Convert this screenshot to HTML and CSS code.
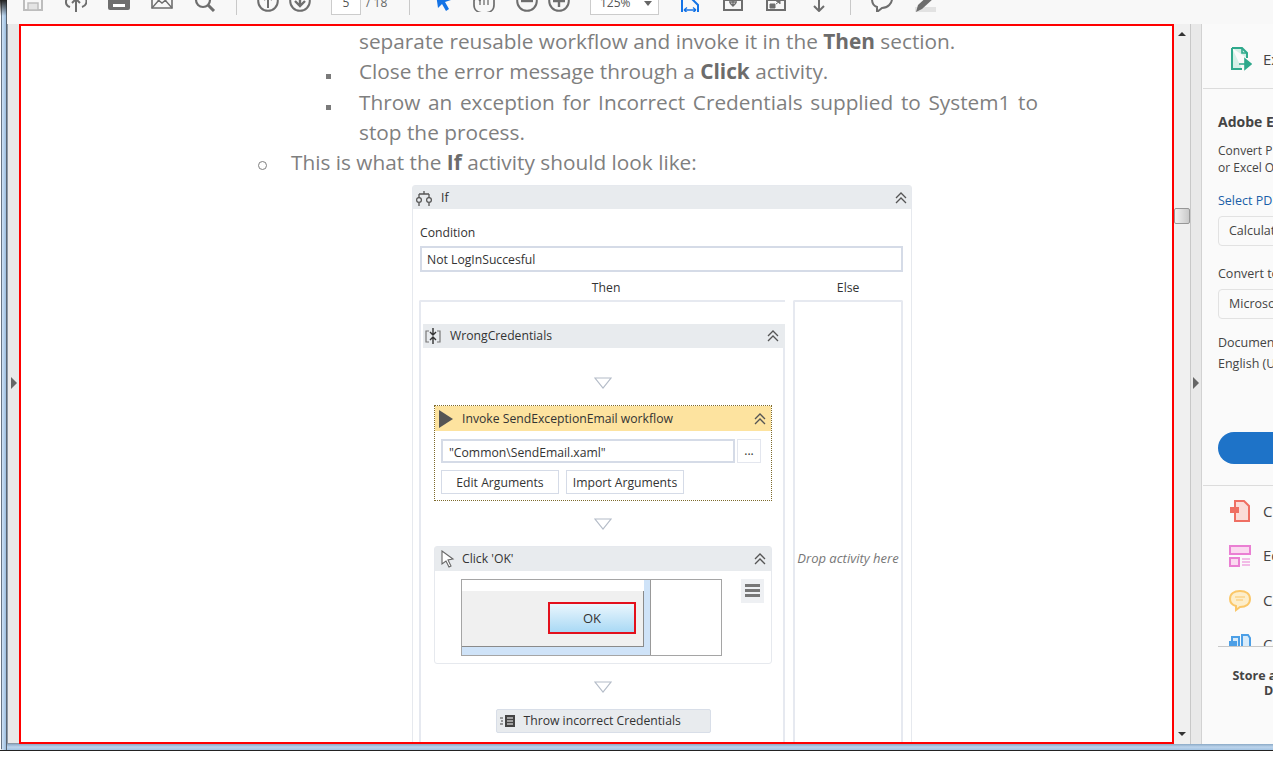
FILE: index.html
```html
<!DOCTYPE html>
<html>
<head>
  <title>Reader</title>
  <link rel="stylesheet" href="styles.css">
</head>
<body>
  <div class="window">
    <div class="edge-left"></div>
    <div class="shell">

      <div class="toolbar">
        <div class="tb-group">
          <svg class="ico" viewBox="0 0 22 22"><path d="M2 1h18v19H2z" fill="none" stroke="#bdbdbd" stroke-width="2"/><path d="M6 13h10v7H6z" fill="#e4e4e4" stroke="#bdbdbd" stroke-width="1.5"/></svg>
          <svg class="ico" viewBox="0 0 22 22"><path d="M5 17C-1 15 0 7 6 7 7 1 16 1 17 7c6 0 6 8 0 10" fill="none" stroke="#6e6e6e" stroke-width="2"/><path d="M11 22V9M7 13l4-4 4 4" fill="none" stroke="#6e6e6e" stroke-width="2"/></svg>
          <svg class="ico" viewBox="0 0 22 22"><path d="M0 3h22v15a2 2 0 0 1-2 2H2a2 2 0 0 1-2-2z" fill="#6e6e6e"/><path d="M5 14h12v3H5z" fill="#fff"/></svg>
          <svg class="ico" viewBox="0 0 22 22"><path d="M1 1h20v17H1z" fill="none" stroke="#6e6e6e" stroke-width="1.6"/><path d="M1 18l7-8 3-3 3 3 7 8M1 5l10 8 10-8" fill="none" stroke="#6e6e6e" stroke-width="1.4"/></svg>
          <svg class="ico" viewBox="0 0 22 22"><circle cx="9" cy="10" r="7" fill="none" stroke="#6e6e6e" stroke-width="2.2"/><path d="M14 15l6 6" stroke="#6e6e6e" stroke-width="3"/></svg>
        </div>
        <div class="tb-sep"></div>
        <div class="tb-group tight">
          <svg class="ico" viewBox="0 0 22 22"><circle cx="11" cy="11" r="9.8" fill="none" stroke="#6e6e6e" stroke-width="2"/><path d="M11 18V6M7 10l4-4 4 4" fill="none" stroke="#6e6e6e" stroke-width="2"/></svg>
          <svg class="ico" viewBox="0 0 22 22"><circle cx="11" cy="11" r="9.8" fill="none" stroke="#6e6e6e" stroke-width="2"/><path d="M11 4v12M6 11l5 5 5-5" fill="none" stroke="#6e6e6e" stroke-width="2.4"/></svg>
        </div>
        <div class="page-box">5</div>
        <div class="page-total">/ 18</div>
        <div class="tb-sep"></div>
        <div class="tb-group">
          <svg class="ico" viewBox="0 0 22 22"><path d="M6 4l15 6-6 2 4 7-3 2-4-7-4 4z" fill="#1473e6"/></svg>
          <svg class="ico" viewBox="0 0 22 22"><path d="M1 11v4c0 5 4 8 10 8s10-3 10-8V8c0-3-3-3-3 0V5c0-3-3-3-3 0V3c0-3-4-3-4 0v1C11 1 7 1 7 4v7C6 8 1 8 1 11z" fill="none" stroke="#6e6e6e" stroke-width="1.7"/><path d="M11 8v7M15 8v7M7 10v5" stroke="#6e6e6e" stroke-width="1.3"/></svg>
          <div class="tb-group tight">
            <svg class="ico" viewBox="0 0 22 22"><circle cx="11" cy="11" r="9.8" fill="none" stroke="#6e6e6e" stroke-width="2"/><path d="M5 11h12" stroke="#6e6e6e" stroke-width="2.4"/></svg>
            <svg class="ico" viewBox="0 0 22 22"><circle cx="11" cy="11" r="9.8" fill="none" stroke="#6e6e6e" stroke-width="2"/><path d="M5 11h12M11 5v12" stroke="#6e6e6e" stroke-width="2.4"/></svg>
          </div>
        </div>
        <div class="zoom-box"><span>125%</span><i class="caret"></i></div>
        <div class="tb-group">
          <svg class="ico" viewBox="0 0 22 22"><path d="M3 22V5h9l1 4 6 6v7" fill="none" stroke="#1473e6" stroke-width="2"/><path d="M5 20h12M5 20l3-2.5M5 20l3 2.5M17 20l-3-2.5M17 20l-3 2.5" stroke="#1473e6" stroke-width="1.3" fill="none"/></svg>
          <svg class="ico" viewBox="0 0 22 22"><path d="M2 10h18v10H2z" fill="none" stroke="#6e6e6e" stroke-width="2"/><path d="M11 9v6M8 13l3 3 3-3M7 12h8" fill="none" stroke="#6e6e6e" stroke-width="1.4"/></svg>
          <svg class="ico" viewBox="0 0 22 22"><path d="M2 10h18v10H2z" fill="none" stroke="#6e6e6e" stroke-width="2"/><path d="M5 14h5v4H5zM11 14l4-3M11 11h4v3" fill="#6e6e6e" stroke="#6e6e6e"/></svg>
          <svg class="ico" viewBox="0 0 22 22"><path d="M11 8v13M6 16l5 5 5-5" fill="none" stroke="#6e6e6e" stroke-width="2"/></svg>
        </div>
        <div class="tb-sep"></div>
        <div class="tb-group">
          <svg class="ico" viewBox="0 0 22 22"><path d="M11 1c6 0 10 4 10 8s-4 9-10 9l-5 4v-5C3 16 1 13 1 9s4-8 10-8z" fill="none" stroke="#6e6e6e" stroke-width="2"/></svg>
          <svg class="ico" viewBox="0 0 22 22"><path d="M1 17h21v5H1z" fill="#e2e2e2"/><path d="M2 22l2-7L16 4l4 4L8 19z" fill="#6e6e6e"/></svg>
        </div>
      </div>

      <div class="main">
        <div class="collapse-left"><i class="tri"></i></div>

        <div class="viewer">
          <div class="doc">
            <div class="sub-item"><span class="no-mark"></span><p>separate reusable workflow and invoke it in the <b>Then</b> section.</p></div>
            <div class="sub-item"><span class="mark-square"></span><p>Close the error message through a <b>Click</b> activity.</p></div>
            <div class="sub-item"><span class="mark-square"></span><p class="justify">Throw an exception for Incorrect Credentials supplied to System1 to stop the process.</p></div>
            <div class="top-item"><span class="mark-circle"></span><p>This is what the <b>If</b> activity should look like:</p></div>

            <div class="wf-if">
              <div class="wf-head if-head">
                <svg class="wf-ico" viewBox="0 0 18 18"><path d="M9 2v3M4 5h10M4 5v4M14 5v4" fill="none" stroke="#555" stroke-width="1.3"/><circle cx="4" cy="11" r="2.4" fill="none" stroke="#555" stroke-width="1.2"/><circle cx="14" cy="11" r="2.4" fill="none" stroke="#555" stroke-width="1.2"/><path d="M4 14v3M14 14v3" stroke="#555" stroke-width="1.3"/></svg>
                <span>If</span>
                <svg class="chev" viewBox="0 0 12 12"><path d="M1 6l5-5 5 5M1 11l5-5 5 5" fill="none" stroke="#555" stroke-width="1.3"/></svg>
              </div>
              <div class="if-body">
                <div class="cond-label">Condition</div>
                <div class="wf-input cond-input">Not LogInSuccesful</div>
                <div class="branch-labels"><span class="then-label">Then</span><span class="else-label">Else</span></div>
                <div class="branches">
                  <div class="then-box">
                    <div class="wf-head seq-head">
                      <svg class="wf-ico" viewBox="0 0 18 18"><path d="M5 4H2v11h3M13 4h3v11h-3" fill="none" stroke="#777" stroke-width="1.2"/><path d="M9 1v6M6 5l3 3 3-3M9 17v-6M6 13l3-3 3 3" fill="none" stroke="#333" stroke-width="1.4"/></svg>
                      <span>WrongCredentials</span>
                      <svg class="chev" viewBox="0 0 12 12"><path d="M1 6l5-5 5 5M1 11l5-5 5 5" fill="none" stroke="#555" stroke-width="1.3"/></svg>
                    </div>
                    <div class="seq-body">
                      <svg class="drop-tri first" viewBox="0 0 18 12"><path d="M1 1h16L9 11z" fill="#fff" stroke="#b4bcc8" stroke-width="1.2"/></svg>

                      <div class="invoke">
                        <div class="wf-head invoke-head">
                          <svg class="play" viewBox="0 0 14 18"><path d="M0 0l14 9-14 9z" fill="#555"/></svg>
                          <span>Invoke SendExceptionEmail workflow</span>
                          <svg class="chev" viewBox="0 0 12 12"><path d="M1 6l5-5 5 5M1 11l5-5 5 5" fill="none" stroke="#555" stroke-width="1.3"/></svg>
                        </div>
                        <div class="invoke-body">
                          <div class="file-row">
                            <div class="wf-input file-input">"Common\SendEmail.xaml"</div>
                            <div class="dots">...</div>
                          </div>
                          <div class="btn-row">
                            <div class="wf-btn">Edit Arguments</div>
                            <div class="wf-btn">Import Arguments</div>
                          </div>
                        </div>
                      </div>

                      <svg class="drop-tri" viewBox="0 0 18 12"><path d="M1 1h16L9 11z" fill="#fff" stroke="#b4bcc8" stroke-width="1.2"/></svg>

                      <div class="click-card">
                        <div class="wf-head click-head">
                          <svg class="wf-ico click-ico" viewBox="0 0 18 18"><path d="M3 1l0 13 4-3 3 6 2-1-3-6 5-1z" fill="#fff" stroke="#666" stroke-width="1.1"/></svg>
                          <span>Click 'OK'</span>
                          <svg class="chev" viewBox="0 0 12 12"><path d="M1 6l5-5 5 5M1 11l5-5 5 5" fill="none" stroke="#555" stroke-width="1.3"/></svg>
                        </div>
                        <div class="click-body">
                          <div class="shot">
                            <div class="shot-dialog">
                              <div class="shot-title"></div>
                              <div class="shot-content"><div class="ok-btn">OK</div></div>
                            </div>
                          </div>
                          <div class="menu-btn"><i></i><i></i><i></i></div>
                        </div>
                      </div>

                      <svg class="drop-tri" viewBox="0 0 18 12"><path d="M1 1h16L9 11z" fill="#fff" stroke="#b4bcc8" stroke-width="1.2"/></svg>

                      <div class="throw">
                        <svg class="throw-ico" viewBox="0 0 16 14"><path d="M5 1h10v12H5z" fill="#444"/><path d="M7 4h6M7 7h6M7 10h6" stroke="#fff" stroke-width="1"/><path d="M0 4h3M1 7h2M0 10h3" stroke="#444"/></svg>
                        <span>Throw incorrect Credentials</span>
                      </div>
                    </div>
                  </div>
                  <div class="else-box">Drop activity here</div>
                </div>
              </div>
            </div>
          </div>
        </div>

        <div class="scrollbar">
          <i class="arrow-up"></i>
          <div class="track"><div class="thumb"></div></div>
          <i class="arrow-down"></i>
        </div>

        <div class="collapse-right"><i class="tri"></i></div>

        <div class="sidebar">
          <div class="export-row">
            <svg class="tool-ico" viewBox="0 0 22 24"><path d="M2 1h10l5 5v5M2 1v21h10" fill="#d5f0e7" stroke="#2fa98c" stroke-width="2"/><path d="M12 1v5h5" fill="none" stroke="#2fa98c" stroke-width="1.6"/><path d="M9 17h9M15 12l6 5-6 5z" fill="#2fa98c" stroke="#2fa98c" stroke-width="1.6"/></svg>
            <span>Export PDF</span>
          </div>
          <div class="export-form">
            <div class="form-title">Adobe Export PDF</div>
            <div class="form-desc">Convert PDF Files to Word<br>or Excel Online</div>
            <div class="form-link">Select PDF File</div>
            <div class="form-select">Calculate Your Tax.pdf</div>
            <div class="form-label">Convert to</div>
            <div class="form-select">Microsoft Word (*.docx)</div>
            <div class="form-label lang-label">Document Language:</div>
            <div class="form-lang">English (U.S.)</div>
            <div class="convert-btn"></div>
          </div>
          <div class="tool-list">
            <div class="tool-row">
              <svg class="tool-ico" viewBox="0 0 22 24"><path d="M6 2h9l5 5v15H6z" fill="#fbdcd8" stroke="#ef6f63" stroke-width="2"/><path d="M1 8h9v6H1z" fill="#ef6f63"/></svg>
              <span>Create PDF</span>
            </div>
            <div class="tool-row">
              <svg class="tool-ico" viewBox="0 0 22 24"><path d="M1 2h20v8H1zM1 14h9v8H1z" fill="#fbd9f0" stroke="#ea7fd3" stroke-width="2"/><path d="M13 15h8M13 18h8M13 21h8" stroke="#ea7fd3"/></svg>
              <span>Edit PDF</span>
            </div>
            <div class="tool-row">
              <svg class="tool-ico" viewBox="0 0 22 24"><path d="M11 3c6 0 10 3 10 8s-4 8-10 8l-4 3v-4C3 17 1 14 1 11c0-5 4-8 10-8z" fill="#fdeecb" stroke="#fbc768" stroke-width="2"/><path d="M6 9h10M7 12h7" stroke="#fbc768"/></svg>
              <span>Comment</span>
            </div>
            <div class="tool-row">
              <svg class="tool-ico" viewBox="0 0 22 24"><path d="M3 4h7v18H3zM13 2h6l2 3v17h-8z" fill="#d8ebfa" stroke="#4c9fe6" stroke-width="2"/><path d="M0 8h8v5H0z" fill="#4c9fe6"/></svg>
              <span>Combine Files</span>
            </div>
          </div>
          <div class="store-note">Store and share files in the<br>Document Cloud</div>
        </div>
      </div>

      <div class="status-bar"></div>
    </div>
  </div>
</body>
</html>
```
FILE: styles.css
```css
html, body {
  margin: 0;
  padding: 0;
  background-color: #fff;
  overflow: hidden;
}

.window {
  display: flex;
  width: 1273px;
  height: 750px;
  border-bottom: 1px solid #222;
  overflow: hidden;
  font-family: "Open Sans", sans-serif;
}

.edge-left {
  width: 7px;
  flex: none;
  background: linear-gradient(to bottom, #222, rgba(34, 34, 34, 0) 16px),
    linear-gradient(to right, #fff 0 1px, #667484 1px 2px, #cfe2f5 2px, #9dbfe0 6px, #5a6470 6px);
  border-bottom-left-radius: 4px;
}

.shell {
  flex: 1;
  min-width: 0;
  display: flex;
  flex-direction: column;
}

/* toolbar, cut by the top of the picture */
.toolbar {
  height: 24px;
  flex: none;
  display: flex;
  align-items: flex-start;
  padding-left: 15px;
  background-color: #f8f8f8;
  overflow: hidden;
}

.tb-group {
  display: flex;
  align-items: flex-start;
  gap: 21px;
}

.tb-group.tight {
  gap: 10px;
}

.ico {
  width: 22px;
  height: 22px;
  flex: none;
  margin-top: -10px;
}

.tb-sep {
  width: 1px;
  height: 15px;
  margin: 0 20px;
  flex: none;
  background-color: #c9c9c9;
}

.page-box {
  width: 28px;
  height: 14px;
  margin-left: 20px;
  border: 1px solid #ccc;
  border-top: none;
  background-color: #fff;
  color: #555;
  font-size: 12px;
  line-height: 6px;
  text-align: center;
  flex: none;
}

.page-total {
  width: 23px;
  margin-left: 5px;
  color: #666;
  font-size: 12px;
  line-height: 6px;
  flex: none;
}

.zoom-box {
  width: 58px;
  height: 14px;
  margin: 0 20px;
  padding-left: 9px;
  border: 1px solid #ccc;
  border-top: none;
  background-color: #fff;
  color: #555;
  font-size: 12px;
  line-height: 6px;
  display: flex;
  flex: none;
}

.caret {
  margin: 1px 0 0 13px;
  width: 0;
  height: 0;
  border: 4px solid transparent;
  border-top: 5px solid #666;
}

/* main row */
.main {
  height: 720px;
  flex: none;
  display: flex;
  overflow: hidden;
}

.collapse-left {
  width: 11px;
  flex: none;
  display: flex;
  align-items: center;
  justify-content: center;
  background-color: #e9e9e9;
  border-left: 1px solid #8b98a6;
  border-bottom: 1px solid #8b98a6;
}

.tri {
  width: 0;
  height: 0;
  margin-top: -2px;
  border-left: 6px solid #666;
  border-top: 6px solid transparent;
  border-bottom: 6px solid transparent;
}

.viewer {
  width: 1155px;
  height: 720px;
  flex: none;
  box-sizing: border-box;
  border: 2px solid #f00;
  background-color: #fff;
  overflow: hidden;
}

.scrollbar {
  width: 17px;
  flex: none;
  display: flex;
  flex-direction: column;
  align-items: center;
  background-color: #f0f0f0;
  border-right: 1px solid #c8c8c8;
  box-sizing: border-box;
}

.arrow-up, .arrow-down {
  width: 0;
  height: 0;
  border: 4px solid transparent;
}

.arrow-up {
  margin-top: 4px;
  border-bottom: 4px solid #333;
}

.arrow-down {
  margin-bottom: 4px;
  border-top: 4px solid #333;
}

.track {
  flex: 1;
  align-self: stretch;
}

.thumb {
  height: 16px;
  margin-top: 172px;
  border: 1px solid #979797;
  border-radius: 2px;
  background: linear-gradient(to right, #f2f2f2, #c9c9c9);
  box-sizing: border-box;
}

.collapse-right {
  width: 10px;
  flex: none;
  display: flex;
  align-items: center;
  justify-content: center;
  background-color: #e9e9e9;
  border-right: 1px solid #d2d2d2;
}

.status-bar {
  flex: 1;
  background: linear-gradient(to bottom, #8aa9c6, #bcd4ec 50%, #a3c3e2);
}

/* document page */
.doc {
  color: #7f7f7f;
  font-size: 20.8px;
  line-height: 30.3px;
}

.doc p {
  margin: 0;
}

.doc b {
  color: #6c6c6c;
}

.sub-item {
  display: flex;
  align-items: baseline;
  width: 1017px;
  padding-left: 338px;
  box-sizing: border-box;
}

.no-mark, .mark-square, .mark-circle {
  flex: none;
  display: block;
}

.no-mark {
  width: 0;
}

.mark-square {
  width: 5px;
  height: 5px;
  margin: 0 28px 5px -33px;
  background-color: #7a7a7a;
}

.justify {
  text-align: justify;
}

.top-item {
  display: flex;
  align-items: baseline;
  padding-left: 237px;
}

.mark-circle {
  width: 7px;
  height: 7px;
  margin-right: 24px;
  border: 1.5px solid #7f7f7f;
  border-radius: 50%;
}

/* workflow picture */
.wf-if {
  width: 500px;
  margin: 8px 0 0 391px;
  box-sizing: border-box;
  border: 1px solid #e6e9ee;
  border-radius: 3px;
  color: #333;
  font-size: 12.2px;
  line-height: 16px;
  background-color: #fff;
}

.wf-head {
  display: flex;
  align-items: center;
  background-color: #e8ebee;
}

.if-head {
  height: 23px;
  padding: 0 4px 0 2px;
}

.wf-ico {
  width: 18px;
  height: 18px;
  margin-right: 8px;
  flex: none;
}

.chev {
  width: 12px;
  height: 12px;
  margin-left: auto;
  flex: none;
}

.if-body {
  padding: 16px 8px 0 6px;
}

.cond-label {
  margin-left: 1px;
}

.wf-input {
  box-sizing: border-box;
  border: 2px solid #d5dbe7;
  background-color: #fff;
}

.cond-input {
  height: 26px;
  margin: 5px 0 0 1px;
  padding-left: 5px;
  line-height: 24px;
}

.branch-labels {
  display: flex;
  height: 16px;
  margin-top: 8px;
  text-align: center;
}

.then-label {
  width: 375px;
}

.else-label {
  width: 110px;
}

.branches {
  display: flex;
  margin-top: 4px;
  height: 520px;
  gap: 8px;
}

.then-box {
  width: 366px;
  box-sizing: border-box;
  padding: 22px 0 0 2px;
  border: 2px solid #e6e9f0;
  border-right: none;
  border-bottom: none;
  border-radius: 2px 0 0 0;
  flex: none;
}

.seq-head {
  height: 24px;
  padding: 0 6px 0 1px;
}

.seq-body {
  display: flex;
  flex-direction: column;
  align-items: center;
  height: 420px;
  border-right: 2px solid #e6e9f0;
}

.drop-tri {
  width: 18px;
  height: 12px;
  flex: none;
  margin: 17px 0 16px;
}

.drop-tri.first {
  margin: 29px 0 16px;
}

.invoke {
  width: 338px;
  box-sizing: border-box;
  border: 1px dotted #7d6a2c;
  flex: none;
}

.invoke-head {
  height: 25px;
  padding: 0 5px 0 4px;
  background-color: #fde39f;
}

.play {
  width: 14px;
  height: 18px;
  margin-right: 9px;
  flex: none;
}

.invoke-body {
  padding: 8px 10px 6px 6px;
}

.file-row {
  display: flex;
  gap: 2px;
}

.file-input {
  width: 294px;
  height: 24px;
  padding-left: 6px;
  line-height: 23px;
  flex: none;
}

.dots {
  width: 24px;
  height: 24px;
  box-sizing: border-box;
  border: 1px solid #e3e6ee;
  text-align: center;
  line-height: 22px;
  flex: none;
}

.btn-row {
  display: flex;
  gap: 7px;
  margin-top: 7px;
}

.wf-btn {
  width: 118px;
  height: 24px;
  box-sizing: border-box;
  border: 1px solid #d5dbe7;
  text-align: center;
  line-height: 23px;
}

.click-card {
  width: 338px;
  height: 118px;
  box-sizing: border-box;
  border: 1px solid #e6e9ee;
  border-radius: 3px;
  flex: none;
}

.click-head {
  height: 24px;
  padding: 0 5px 0 4px;
}

.click-ico {
  margin-right: 5px;
}

.click-body {
  display: flex;
  align-items: flex-start;
  padding: 8px 0 0 26px;
}

.shot {
  width: 261px;
  height: 77px;
  box-sizing: border-box;
  border: 1px solid #a5a5a5;
  background-color: #fff;
  flex: none;
}

.shot-dialog {
  width: 189px;
  height: 75px;
  box-sizing: border-box;
  padding: 0 6px 8px 0;
  border-right: 1px solid #999;
  background-color: #cfe3f8;
}

.shot-title {
  height: 11px;
  background-color: #fff;
}

.shot-content {
  height: 56px;
  box-sizing: border-box;
  padding: 11px 0 0 86px;
  background-color: #f0f0f0;
  border-right: 1px solid #8a8a8a;
  border-bottom: 1px solid #8a8a8a;
}

.ok-btn {
  width: 88px;
  height: 32px;
  box-sizing: border-box;
  border: 2px solid #e3101c;
  background: linear-gradient(to bottom, #eaf6fd, #a9d9f5);
  text-align: center;
  line-height: 28px;
  font-size: 13px;
}

.menu-btn {
  width: 23px;
  height: 24px;
  margin-left: 19px;
  box-sizing: border-box;
  padding: 5px 4px 0;
  background-color: #eef0f3;
  flex: none;
}

.menu-btn i {
  display: block;
  height: 3px;
  margin-bottom: 2px;
  background-color: #777;
}

.throw {
  width: 215px;
  height: 24px;
  box-sizing: border-box;
  display: flex;
  align-items: center;
  padding-left: 3px;
  border: 1px solid #d8dee8;
  border-radius: 2px;
  background-color: #e8ebee;
  flex: none;
}

.throw-ico {
  width: 16px;
  height: 14px;
  margin-right: 8px;
  flex: none;
}

.else-box {
  width: 110px;
  box-sizing: border-box;
  border: 2px solid #e6e9f0;
  border-bottom: none;
  border-radius: 2px 2px 0 0;
  padding-top: 248px;
  color: #777;
  font-style: italic;
  font-size: 13px;
  text-align: center;
  white-space: nowrap;
  flex: none;
}

/* right side panel, runs past the window edge */
.sidebar {
  width: 228px;
  flex: none;
  background-color: #fafafa;
  color: #444;
  font-size: 12px;
  line-height: 17px;
}

.export-row {
  height: 65px;
  box-sizing: border-box;
  display: flex;
  align-items: center;
  gap: 11px;
  padding: 6px 0 0 27px;
  border-bottom: 1px solid #dcdcdc;
  margin-left: 1px;
  font-size: 15px;
}

.tool-ico {
  width: 22px;
  height: 24px;
  flex: none;
}

.export-form {
  height: 397px;
  box-sizing: border-box;
  padding: 24px 0 0 15px;
  border-bottom: 1px solid #dcdcdc;
  margin-left: 1px;
}

.form-title {
  font-size: 14px;
  font-weight: bold;
  line-height: 18px;
  white-space: nowrap;
}

.form-desc {
  margin-top: 11px;
  white-space: nowrap;
}

.form-link {
  margin-top: 16px;
  color: #1a5fa8;
  font-size: 12.5px;
}

.form-select {
  width: 190px;
  height: 30px;
  margin-top: 7px;
  padding-left: 10px;
  box-sizing: border-box;
  border: 1px solid #e2e2e2;
  border-radius: 4px;
  line-height: 28px;
  font-size: 12.5px;
}

.form-label {
  margin-top: 19px;
  font-size: 12.5px;
}

.lang-label {
  margin-top: 15px;
}

.form-lang {
  margin-top: 4px;
  font-size: 12.5px;
}

.convert-btn {
  width: 190px;
  height: 32px;
  margin-top: 60px;
  border-radius: 16px;
  background-color: #1e73c8;
}

.tool-list {
  height: 161px;
  box-sizing: border-box;
  margin-left: 16px;
  padding-left: 11px;
  border-bottom: 1px solid #c8c8c8;
  overflow: hidden;
}

.tool-row {
  display: flex;
  align-items: center;
  gap: 12px;
  height: 24px;
  margin: 13px 0 20.5px;
  font-size: 15px;
  white-space: nowrap;
}

.store-note {
  margin-top: 21px;
  font-size: 12.5px;
  font-weight: bold;
  line-height: 15px;
  text-align: center;
  white-space: nowrap;
}
```
